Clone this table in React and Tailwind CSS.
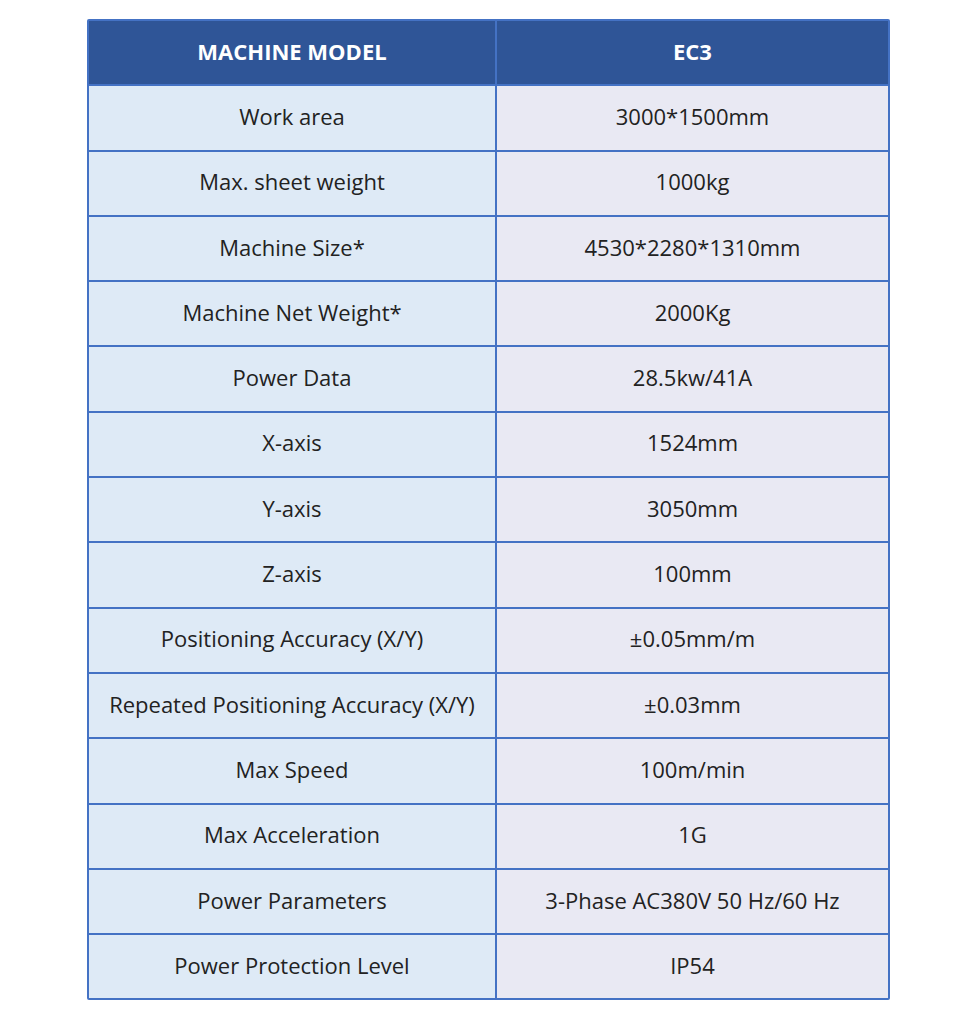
import React from "react";

const rows = [
  ["Work area", "3000*1500mm"],
  ["Max. sheet weight", "1000kg"],
  ["Machine Size*", "4530*2280*1310mm"],
  ["Machine Net Weight*", "2000Kg"],
  ["Power Data", "28.5kw/41A"],
  ["X-axis", "1524mm"],
  ["Y-axis", "3050mm"],
  ["Z-axis", "100mm"],
  ["Positioning Accuracy (X/Y)", "±0.05mm/m"],
  ["Repeated Positioning Accuracy (X/Y)", "±0.03mm"],
  ["Max Speed", "100m/min"],
  ["Max Acceleration", "1G"],
  ["Power Parameters", "3-Phase AC380V 50 Hz/60 Hz"],
  ["Power Protection Level", "IP54"],
];

export default function App() {
  return (
    <div className="min-h-screen bg-white pt-[19px] pl-[87px]" style={{ fontFamily: '"Open Sans", "Noto Sans", sans-serif' }}>
      <div className="w-[803px] bg-[#4472c4] p-[2px] grid grid-cols-[406px_1fr] gap-[2px] rounded-[2px]">
        <div className="h-[63.3px] bg-[#2f5597] flex items-center justify-center pb-[3px] text-white font-bold text-[22px]">
          MACHINE MODEL
        </div>
        <div className="h-[63.3px] bg-[#2f5597] flex items-center justify-center pb-[3px] text-white font-bold text-[22px]">
          EC3
        </div>
        {rows.map(([label, value]) => (
          <React.Fragment key={label}>
            <div className="h-[63.3px] bg-[#deeaf6] flex items-center justify-center pb-[3px] text-[#222] text-[22px]">
              {label}
            </div>
            <div className="h-[63.3px] bg-[#e9e9f3] flex items-center justify-center pb-[3px] text-[#222] text-[22px]">
              {value}
            </div>
          </React.Fragment>
        ))}
      </div>
    </div>
  );
}
